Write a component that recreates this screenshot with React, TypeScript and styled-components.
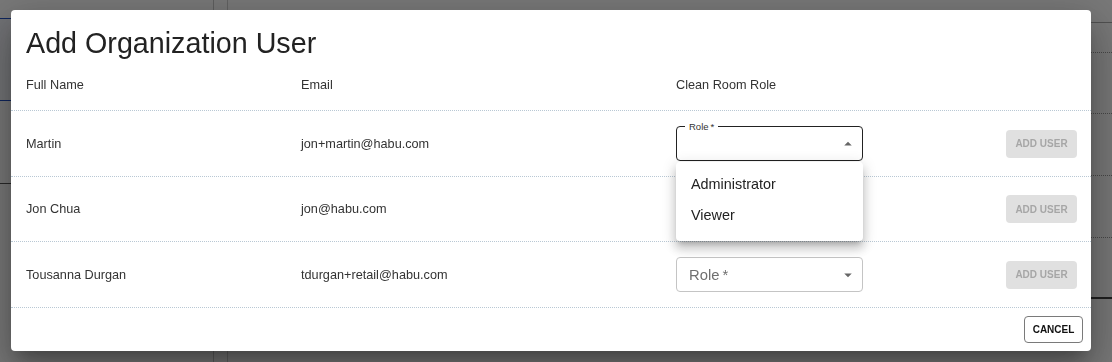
import styled, { createGlobalStyle } from "styled-components";
import { FC } from "react";

const GlobalStyle = createGlobalStyle`
  html, body {
    margin: 0;
    padding: 0;
    background: #ffffff;
    font-family: "Liberation Sans", Arial, Helvetica, sans-serif;
  }
  * {
    box-sizing: border-box;
  }
`;

/* page behind the dialog */
const Page = styled.div`
  display: flex;
  height: 100vh;
  overflow: hidden;
  background: #ffffff;
`;

const Sidebar = styled.div`
  width: 214px;
  border-right: 1px solid #c8c8c8;
  display: flex;
  flex-direction: column;
  padding-top: 18px;
`;

const NavItem = styled.div<{ $active?: boolean }>`
  height: 83px;
  border-top: ${(p) => (p.$active ? "1px solid #1f4fc4" : "none")};
  border-bottom: 1px solid ${(p) => (p.$active ? "#1f4fc4" : "#555")};
  background: ${(p) => (p.$active ? "#f2f4fa" : "transparent")};
`;

const Gutter = styled.div`
  width: 14px;
  border-right: 1px solid #d0d0d0;
`;

const Main = styled.div`
  flex: 1;
  display: flex;
  flex-direction: column;
`;

const MainHeader = styled.div`
  height: 23px;
  border-bottom: 1px solid #aaaaaa;
`;

const BgRow = styled.div<{ $h: number; $solid?: boolean }>`
  height: ${(p) => p.$h}px;
  border-bottom: ${(p) => (p.$solid ? "2px solid #444" : "1px dotted #999")};
`;

/* dialog */
const Backdrop = styled.div`
  position: fixed;
  inset: 0;
  background: rgba(0, 0, 0, 0.53);
  display: flex;
  align-items: flex-start;
  padding: 10px 21px 0 11px;
`;

const Dialog = styled.div`
  width: 100%;
  background: #ffffff;
  border-radius: 4px;
  box-shadow: 0px 11px 15px -7px rgba(0, 0, 0, 0.25),
    0px 24px 38px 3px rgba(0, 0, 0, 0.2), 0px 9px 46px 8px rgba(0, 0, 0, 0.16);
  display: flex;
  flex-direction: column;
`;

const Title = styled.h2`
  margin: 0;
  padding: 16px 15px 0;
  font-size: 28.7px;
  line-height: 34px;
  font-weight: 400;
  color: #222222;
`;

const TableRow = styled.div<{ $h: number }>`
  display: grid;
  grid-template-columns: 275px 375px 1fr auto;
  align-items: center;
  height: ${(p) => p.$h}px;
  padding: 0 14px 0 15px;
  border-bottom: 1px dotted #b9c8d4;
  font-size: 12.7px;
  color: #333333;
`;

const Cell = styled.div`
  white-space: nowrap;
`;

const SelectBox = styled.div<{ $focused?: boolean }>`
  position: relative;
  width: 187px;
  height: 35px;
  border: 1px solid ${(p) => (p.$focused ? "#222222" : "#c4c4c4")};
  border-radius: 4px;
  display: flex;
  align-items: center;
  justify-content: space-between;
  padding: 0 5px 0 12px;
`;

const Placeholder = styled.span`
  font-size: 14.8px;
  color: #6f6f6f;
`;

const FloatLabel = styled.span`
  position: absolute;
  top: -6px;
  left: 8px;
  padding: 0 4px;
  background: #ffffff;
  font-size: 9.5px;
  line-height: 11px;
  color: #333333;
`;

const Menu = styled.ul`
  position: absolute;
  top: 35px;
  left: -1px;
  width: 187px;
  margin: 0;
  padding: 6px 0 10px;
  list-style: none;
  background: #ffffff;
  border-radius: 4px;
  box-shadow: 0px 5px 5px -3px rgba(0, 0, 0, 0.2),
    0px 8px 10px 1px rgba(0, 0, 0, 0.14), 0px 3px 14px 2px rgba(0, 0, 0, 0.12);
  z-index: 2;
`;

const MenuItem = styled.li`
  height: 31.5px;
  display: flex;
  align-items: center;
  padding: 0 15px;
  font-size: 14.4px;
  color: #222222;
`;

const DisabledButton = styled.button`
  width: 71px;
  height: 28px;
  border: none;
  border-radius: 4px;
  background: #e0e0e0;
  color: #a6a6a6;
  font-family: inherit;
  font-size: 10px;
  font-weight: 700;
  padding: 0;
`;

const Footer = styled.div`
  display: flex;
  justify-content: flex-end;
  padding: 8px;
`;

const OutlineButton = styled.button`
  width: 59px;
  height: 27px;
  border: 1px solid #7a7a7a;
  border-radius: 4px;
  background: #ffffff;
  color: #111111;
  font-family: inherit;
  font-size: 10px;
  font-weight: 700;
  padding: 0;
`;

const Arrow: FC<{ up?: boolean }> = ({ up }) => (
  <svg width="18" height="18" viewBox="0 0 24 24" fill="#666666">
    <path d={up ? "M7 14l5-5 5 5z" : "M7 10l5 5 5-5z"} />
  </svg>
);

const users = [
  { name: "Martin", email: "jon+martin@habu.com", open: true, h: 66 },
  { name: "Jon Chua", email: "jon@habu.com", open: false, h: 65 },
  { name: "Tousanna Durgan", email: "tdurgan+retail@habu.com", open: false, h: 66 },
];

const RoleSelect: FC<{ open: boolean; hidden: boolean }> = ({ open, hidden }) => {
  if (hidden) return <div />;
  if (open) {
    return (
      <SelectBox $focused>
        <FloatLabel>Role&thinsp;*</FloatLabel>
        <span />
        <Arrow up />
        <Menu>
          <MenuItem>Administrator</MenuItem>
          <MenuItem>Viewer</MenuItem>
        </Menu>
      </SelectBox>
    );
  }
  return (
    <SelectBox>
      <Placeholder>Role&thinsp;*</Placeholder>
      <Arrow />
    </SelectBox>
  );
};

export default function App() {
  return (
    <>
      <GlobalStyle />
      <Page>
        <Sidebar>
          <NavItem $active />
          <NavItem />
        </Sidebar>
        <Gutter />
        <Main>
          <MainHeader />
          <BgRow $h={30} />
          <BgRow $h={61} />
          <BgRow $h={62} />
          <BgRow $h={62} />
          <BgRow $h={61} $solid />
        </Main>
      </Page>
      <Backdrop>
        <Dialog>
          <Title>Add Organization User</Title>
          <TableRow $h={51}>
            <Cell>Full Name</Cell>
            <Cell>Email</Cell>
            <Cell>Clean Room Role</Cell>
            <div />
          </TableRow>
          {users.map((u) => (
            <TableRow key={u.email} $h={u.h}>
              <Cell>{u.name}</Cell>
              <Cell>{u.email}</Cell>
              <RoleSelect open={u.open} hidden={u.name === "Jon Chua"} />
              <DisabledButton disabled>ADD USER</DisabledButton>
            </TableRow>
          ))}
          <Footer>
            <OutlineButton>CANCEL</OutlineButton>
          </Footer>
        </Dialog>
      </Backdrop>
    </>
  );
}
